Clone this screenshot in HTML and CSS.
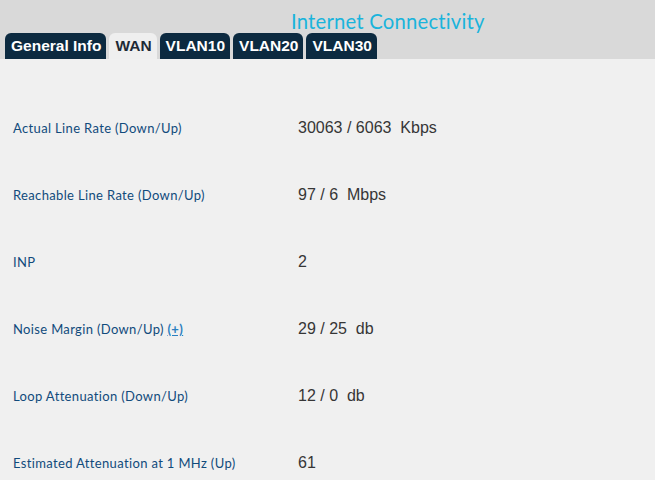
FILE: index.html
```html
<!DOCTYPE html>
<html>
<head>
<meta charset="utf-8">
<link rel="stylesheet" href="styles.css">
</head>
<body>
<div class="header">
  <div class="title">Internet Connectivity</div>
  <div class="tabs">
    <div class="tab">General Info</div>
    <div class="tab active">WAN</div>
    <div class="tab">VLAN10</div>
    <div class="tab">VLAN20</div>
    <div class="tab">VLAN30</div>
  </div>
</div>
<div class="content">
  <div class="row"><div class="label">Actual Line Rate (Down/Up)</div><div class="value">30063 / 6063&nbsp; Kbps</div></div>
  <div class="row"><div class="label">Reachable Line Rate (Down/Up)</div><div class="value">97 / 6&nbsp; Mbps</div></div>
  <div class="row"><div class="label">INP</div><div class="value">2</div></div>
  <div class="row"><div class="label">Noise Margin (Down/Up) <span class="more">(+)</span></div><div class="value">29 / 25&nbsp; db</div></div>
  <div class="row"><div class="label">Loop Attenuation (Down/Up)</div><div class="value">12 / 0&nbsp; db</div></div>
  <div class="row"><div class="label">Estimated Attenuation at 1 MHz (Up)</div><div class="value">61</div></div>
</div>
</body>
</html>
```
FILE: styles.css
```css
html, body {
  margin: 0;
  padding: 0;
  background: #f0f0f0;
  overflow: hidden;
}
.header {
  background: #d9d9d9;
  height: 59px;
  display: flex;
  flex-direction: column;
  justify-content: space-between;
}
.title {
  font-family: Lato, sans-serif;
  font-size: 20.3px;
  color: #1ab4dc;
  padding-left: 291px;
  padding-top: 9px;
  line-height: 24px;
  letter-spacing: 0.2px;
}
.tabs {
  display: flex;
  gap: 3px;
  padding-left: 5px;
}
.tab {
  background: #0c2a40;
  color: #ffffff;
  font-family: "Liberation Sans", Arial, sans-serif;
  font-weight: bold;
  font-size: 15.5px;
  line-height: 26px;
  height: 26px;
  padding: 0 5px 0 6px;
  border-radius: 6px 6px 0 0;
}
.tab.active {
  background: #efefef;
  color: #1e2a36;
}
.content {
  padding-top: 35px;
}
.row {
  display: flex;
  align-items: center;
  height: 67px;
}
.label {
  width: 285px;
  padding-left: 13px;
  font-family: Lato, sans-serif;
  font-size: 13px;
  color: #114b7c;
  letter-spacing: 0.35px;
}
.more {
  color: #2a7fc0;
  text-decoration: underline;
  font-weight: bold;
}
.value {
  font-family: "Liberation Sans", Arial, sans-serif;
  font-size: 16px;
  color: #363636;
}
```
